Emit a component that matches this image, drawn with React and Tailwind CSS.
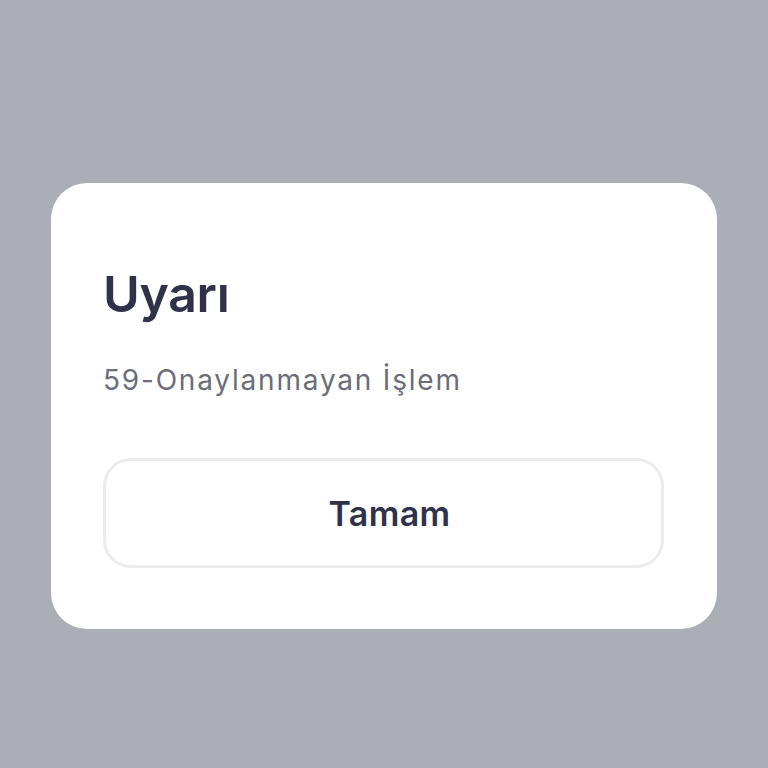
export default function App() {
  return (
    <div className="w-[768px] h-[768px] bg-[#acaeb6] pt-[183px] pl-[51px]" style={{ fontFamily: "Inter, 'Noto Sans', sans-serif" }}>
      <div className="w-[666px] h-[446px] bg-white rounded-[36px] px-[52px] pt-[86px] flex flex-col">
        <h1 className="text-[50px] leading-[50px] font-semibold text-[#2f3249] tracking-[-0.3px]">Uyarı</h1>
        <p className="mt-[44px] text-[28px] leading-[34px] text-[#6b6d79] tracking-[1.8px]">59-Onaylanmayan İşlem</p>
        <button className="mt-[61px] w-[561px] h-[110px] rounded-[28px] border-[3px] border-[#ececec] bg-white flex items-center justify-center pl-[12px] text-[34px] font-semibold text-[#2f3249] tracking-[0.4px]">
          Tamam
        </button>
      </div>
    </div>
  );
}
